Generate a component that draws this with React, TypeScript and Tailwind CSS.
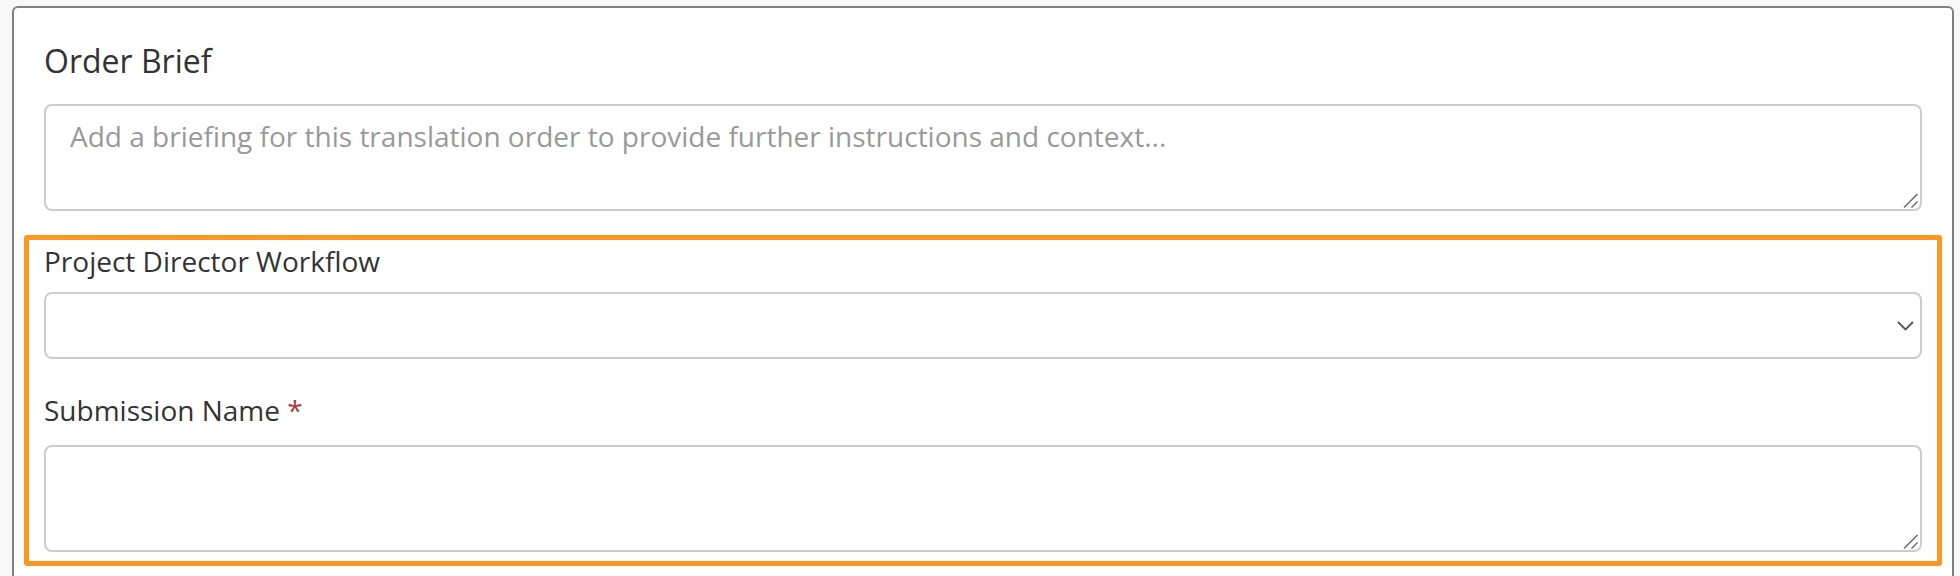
import React, { useState } from "react";

const font = { fontFamily: "'Open Sans', 'Noto Sans', sans-serif" };

const Grip = () => (
  <svg
    className="pointer-events-none absolute bottom-[3px] right-[4px]"
    width="15"
    height="15"
    viewBox="0 0 15 15"
    fill="none"
  >
    <path d="M1 14.5L14.5 1M8.5 14.5L14.5 8.5" stroke="#666" strokeWidth="1.4" />
  </svg>
);

const OrderBriefForm = () => {
  const [brief, setBrief] = useState("");
  const [workflow, setWorkflow] = useState("");
  const [submissionName, setSubmissionName] = useState("");

  return (
    <div className="min-h-screen bg-[#f8f8f8] pt-[6px]" style={font}>
      <div className="ml-[12px] w-[1942px] rounded-[6px] border-2 border-[#808080] bg-white px-[30px] pt-[28px] pb-[40px]">
        {/* Order Brief */}
        <h2 className="text-[32px] leading-[49px] text-[#333]">Order Brief</h2>
        <div className="relative mt-[19px]">
          <textarea
            value={brief}
            onChange={(e) => setBrief(e.target.value)}
            placeholder="Add a briefing for this translation order to provide further instructions and context..."
            className="block h-[107px] w-full resize-none rounded-[8px] border-2 border-[#cccccc] bg-white px-[24px] pt-[9px] text-[28px] leading-[43px] text-[#333] outline-none placeholder:text-[#999999]"
          />
          <Grip />
        </div>

        {/* Highlighted fields */}
        <div className="-mx-[20px] mt-[24px] rounded-[3px] border-[5px] border-[#fe961f] px-[15px] pb-[9px]">
          <label className="block text-[28px] leading-[43px] text-[#333]">
            Project Director Workflow
          </label>
          <div className="relative mt-[9px]">
            <select
              value={workflow}
              onChange={(e) => setWorkflow(e.target.value)}
              className="block h-[67px] w-full appearance-none rounded-[8px] border-2 border-[#cccccc] bg-white px-[24px] text-[28px] text-[#333] outline-none"
            >
              <option value=""></option>
            </select>
            <svg
              className="pointer-events-none absolute right-[8px] top-[29px]"
              width="17"
              height="10"
              viewBox="0 0 17 10"
              fill="none"
            >
              <path d="M1 1l7.5 7.5L16 1" stroke="#555" strokeWidth="1.8" />
            </svg>
          </div>

          <label className="mt-[30px] block text-[28px] leading-[43px] text-[#333]">
            Submission Name <span className="text-[#a83c3c]">*</span>
          </label>
          <div className="relative mt-[13px]">
            <textarea
              value={submissionName}
              onChange={(e) => setSubmissionName(e.target.value)}
              className="block h-[107px] w-full resize-none rounded-[8px] border-2 border-[#cccccc] bg-white px-[24px] pt-[9px] text-[28px] leading-[43px] text-[#333] outline-none"
            />
            <Grip />
          </div>
        </div>
      </div>
    </div>
  );
};

export default function App() {
  return <OrderBriefForm />;
}
